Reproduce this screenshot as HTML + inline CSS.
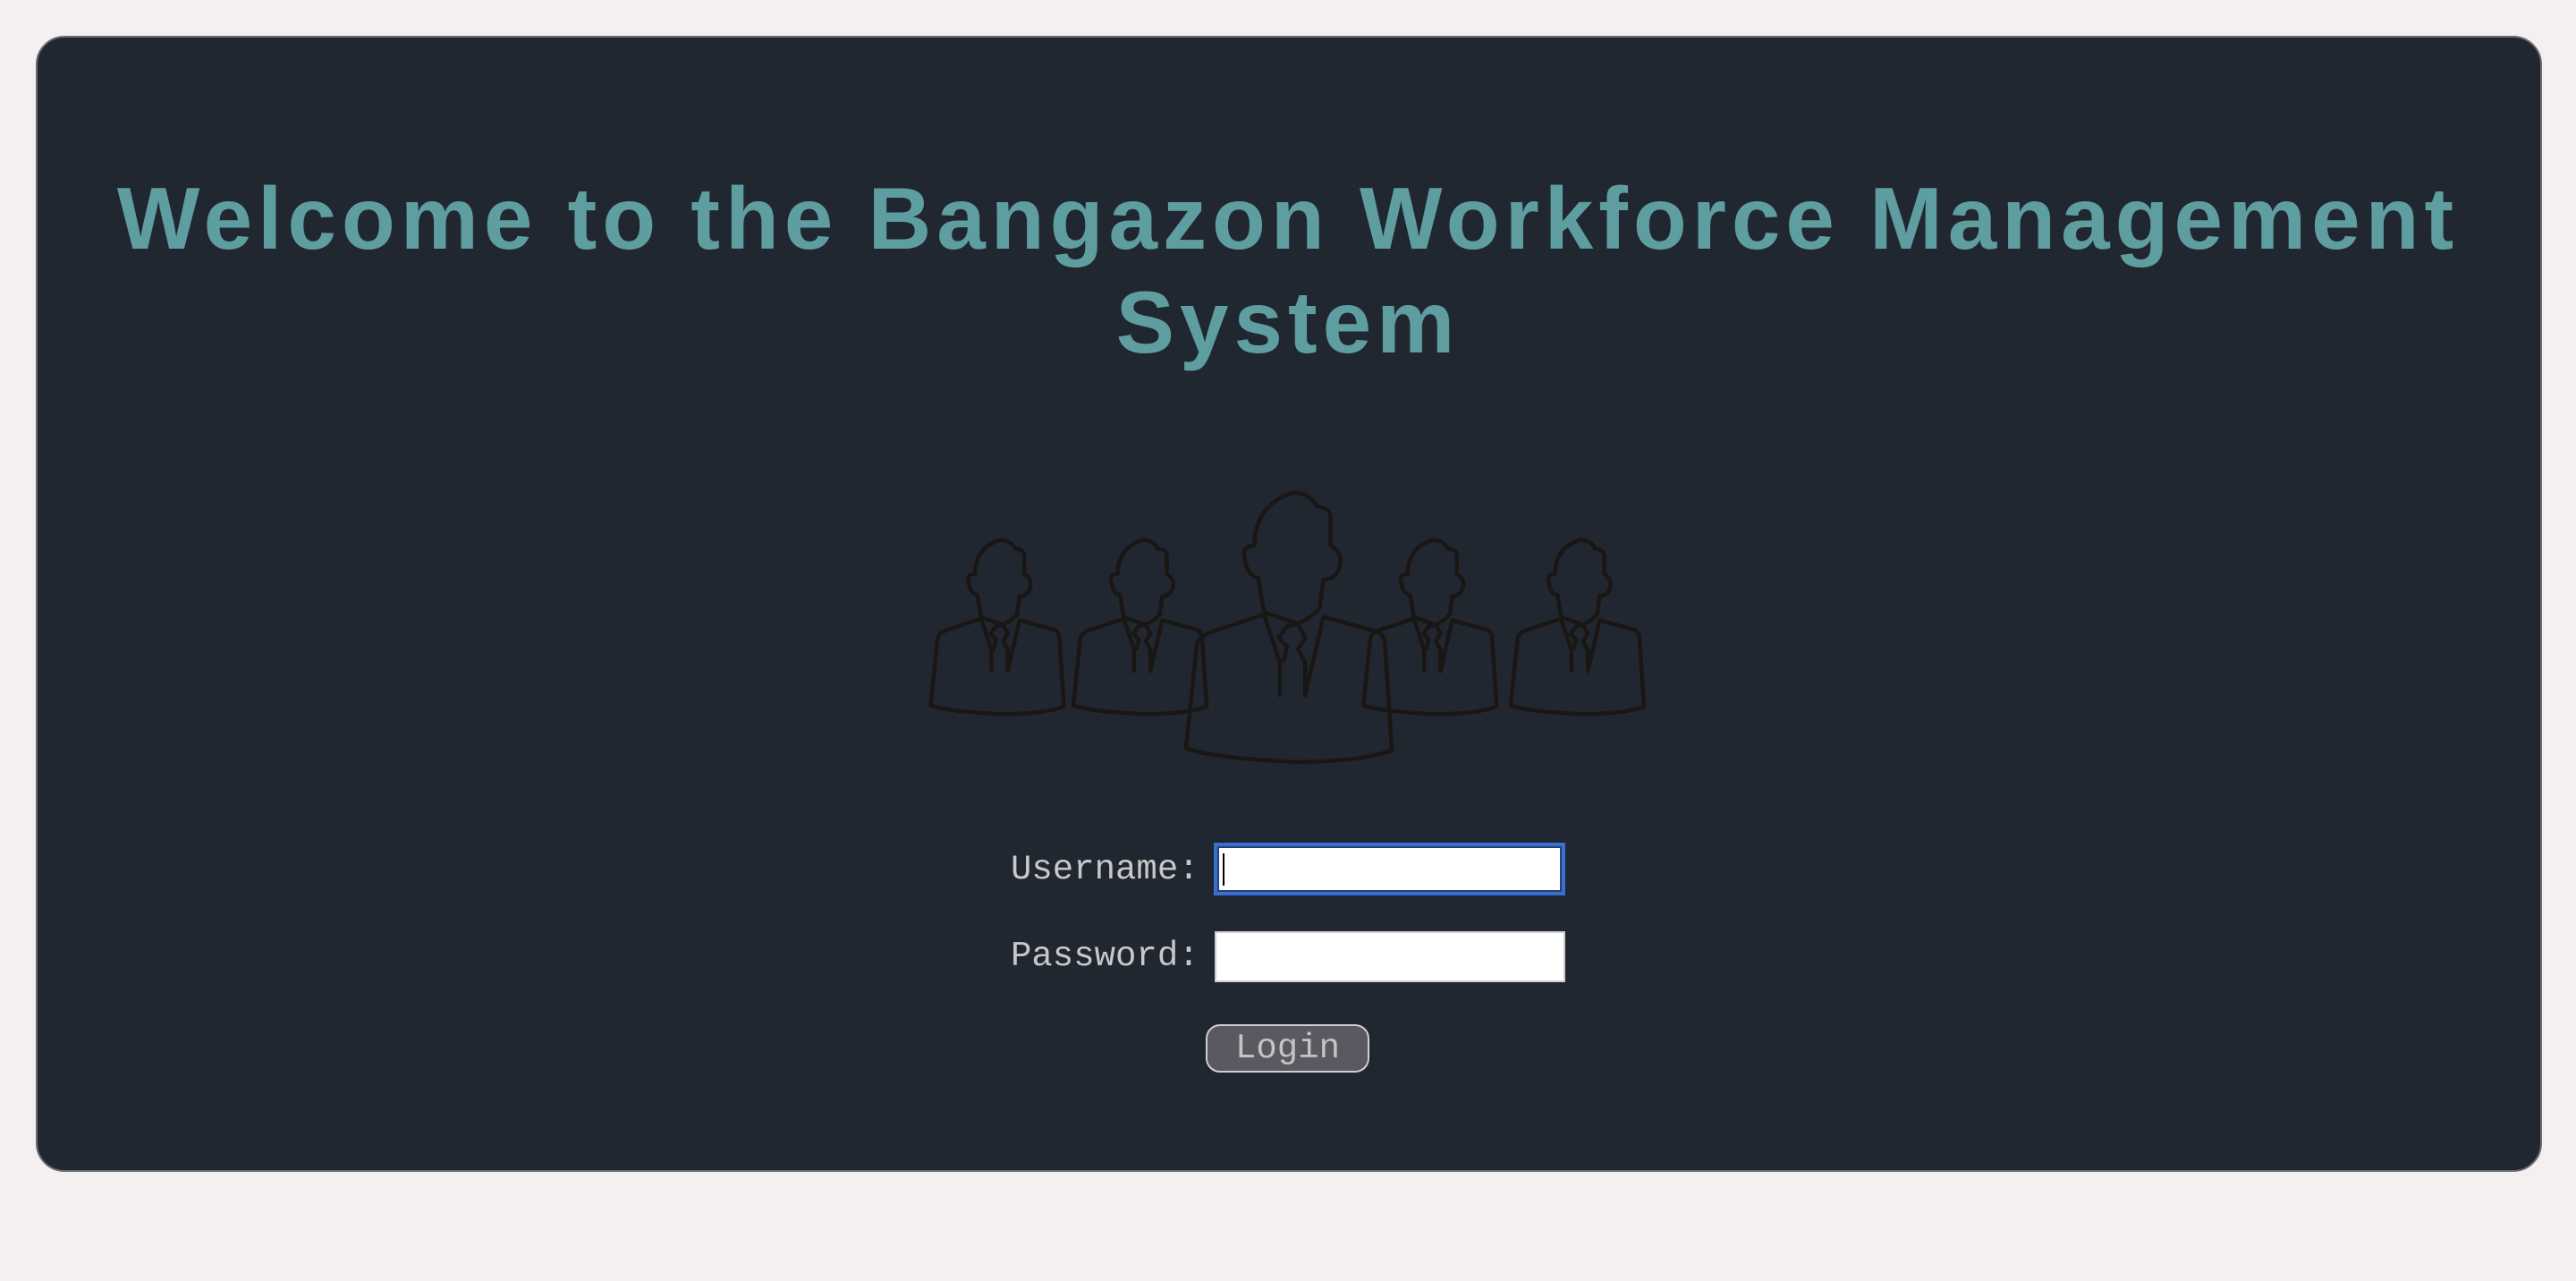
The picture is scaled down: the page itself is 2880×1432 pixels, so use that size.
<!DOCTYPE html>
<html><head><meta charset="utf-8"><style>
html,body{margin:0;padding:0;background:#f3f0ef;width:2880px;height:1432px;overflow:hidden}
.card{position:absolute;left:40px;top:40px;width:2798px;height:1266px;background:#212731;border:2px solid #6a6d73;border-radius:32px}
h1{position:absolute;left:0;top:0;width:2880px;margin:0;text-align:center;color:#5f9ea0;font-family:"Liberation Sans",sans-serif;font-weight:bold;font-size:98px;line-height:116px;letter-spacing:6px}
.l1{position:absolute;top:186px;left:0;width:2880px}
.l2{position:absolute;top:302px;left:0;width:2880px}
svg{position:absolute;left:1030px;top:540px}
.lbl{position:absolute;font-family:"Liberation Mono",monospace;font-size:39px;color:#c8c8c8}
.inp{position:absolute;background:#fff;box-sizing:border-box}
.btn{position:absolute;left:1348px;top:1145px;width:183px;height:54px;box-sizing:border-box;background:#5a5860;border:2px solid #cfcfcf;border-radius:16px;color:#c4c4c4;font-family:"Liberation Mono",monospace;font-size:39px;text-align:center;line-height:50px}
</style></head><body>
<div class="card"></div>
<h1><div class="l1">Welcome to the Bangazon Workforce Management</div><div class="l2">System</div></h1>
<svg width="820" height="320" viewBox="0 0 1568 960" preserveAspectRatio="none">
<defs><g id="p" fill="none" stroke="#1a1614" stroke-linejoin="round" stroke-linecap="round">
<path vector-effect="non-scaling-stroke" stroke-width="4.5" d="M128,450 L120,375 Q103,372 100,320 Q102,305 115,305 Q115,215 170,190 Q195,195 200,220 Q218,222 220,240 L220,305 Q237,320 233,350 Q228,378 210,380 L205,440 Q195,460 175,475 L128,450"/>
<path vector-effect="non-scaling-stroke" stroke-width="4.5" d="M128,455 L60,490 Q38,500 35,520 L20,745 Q50,765 170,775 Q260,775 305,750 L295,510 Q290,492 280,490 L210,460 L185,630"/>
<path vector-effect="non-scaling-stroke" stroke-width="4.5" d="M128,455 L150,560 L150,630 M155,555 L160,525 L148,505 L160,480 L175,475 L185,505 L175,530 L185,560 L185,630"/>
</g></defs>
<use href="#p"/>
<use href="#p" transform="translate(305,0)"/>
<use href="#p" transform="translate(925,0)"/>
<use href="#p" transform="translate(1240,0)"/>
<use href="#p" transform="translate(535,-262) scale(1.545)"/>
</svg>
<div class="lbl" style="left:1130px;top:950px">Username:</div>
<div class="inp" style="left:1357px;top:942px;width:393px;height:59px;border:4px solid #3a6fd0;box-shadow:0 0 0 2px #24407a inset"><div style="position:absolute;left:6px;top:8px;width:2px;height:36px;background:#000"></div></div>
<div class="lbl" style="left:1130px;top:1047px">Password:</div>
<div class="inp" style="left:1358px;top:1041px;width:392px;height:57px;border:2px solid #cfcfcf"></div>
<div class="btn">Login</div>
</body></html>
